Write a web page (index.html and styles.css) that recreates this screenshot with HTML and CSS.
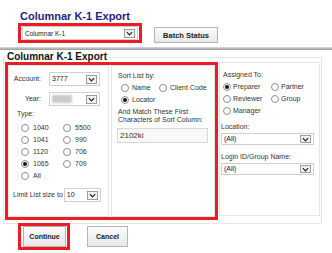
FILE: index.html
```html
<!DOCTYPE html>
<html>
<head>
	<title>Columnar K-1 Export</title>
	<link rel="stylesheet" href="styles.css">
</head>
<body>
	<h1 class="title">Columnar K-1 Export</h1>
	<div class="toolbar">
		<div class="mark mark-sel">
			<div class="select select-top">
				<span class="val">Columnar K-1</span>
				<span class="arrow"><svg viewBox="0 0 8 5"><polyline points="1,1 4,4 7,1"/></svg></span>
			</div>
		</div>
		<div class="button batch">Batch Status</div>
	</div>
	<div class="rule"></div>

	<fieldset class="panel">
		<legend>Columnar K-1 Export</legend>
		<div class="cols">
			<div class="mark mark-main">
				<div class="group left">
					<div class="field account">
						<label>Account:</label>
						<div class="select select-sm">
							<span class="val">3777</span>
							<span class="arrow"><svg viewBox="0 0 8 5"><polyline points="1,1 4,4 7,1"/></svg></span>
						</div>
					</div>
					<div class="field year">
						<label>Year:</label>
						<div class="select select-sm">
							<span class="val"><span class="blur"></span></span>
							<span class="arrow"><svg viewBox="0 0 8 5"><polyline points="1,1 4,4 7,1"/></svg></span>
						</div>
					</div>
					<div class="cap type">Type:</div>
					<div class="radios types">
						<label class="opt"><input type="radio" name="type">1040</label>
						<label class="opt"><input type="radio" name="type">5500</label>
						<label class="opt"><input type="radio" name="type">1041</label>
						<label class="opt"><input type="radio" name="type">990</label>
						<label class="opt"><input type="radio" name="type">1120</label>
						<label class="opt"><input type="radio" name="type">706</label>
						<label class="opt"><input type="radio" name="type" checked>1065</label>
						<label class="opt"><input type="radio" name="type">709</label>
						<label class="opt"><input type="radio" name="type">All</label>
					</div>
					<div class="field limit">
						<label>Limit List size to</label>
						<div class="select select-limit">
							<span class="val">10</span>
							<span class="arrow"><svg viewBox="0 0 8 5"><polyline points="1,1 4,4 7,1"/></svg></span>
						</div>
					</div>
				</div>
				<div class="group middle">
					<div class="cap">Sort List by:</div>
					<div class="radios sort">
						<label class="opt"><input type="radio" name="sort">Name</label>
						<label class="opt"><input type="radio" name="sort">Client Code</label>
						<label class="opt"><input type="radio" name="sort" checked>Locator</label>
					</div>
					<div class="cap match">And Match These First<br>Characters of Sort Column:</div>
					<input class="text" type="text" value="2102ki">
				</div>
			</div>
			<div class="group right">
				<div class="cap assigned">Assigned To:</div>
				<div class="radios assign">
					<label class="opt"><input type="radio" name="who" checked>Preparer</label>
					<label class="opt"><input type="radio" name="who">Partner</label>
					<label class="opt"><input type="radio" name="who">Reviewer</label>
					<label class="opt"><input type="radio" name="who">Group</label>
					<label class="opt"><input type="radio" name="who">Manager</label>
				</div>
				<div class="cap location">Location:</div>
				<div class="select select-wide">
					<span class="val">(All)</span>
					<span class="arrow"><svg viewBox="0 0 8 5"><polyline points="1,1 4,4 7,1"/></svg></span>
				</div>
				<div class="cap login">Login ID/Group Name:</div>
				<div class="select select-wide">
					<span class="val">(All)</span>
					<span class="arrow"><svg viewBox="0 0 8 5"><polyline points="1,1 4,4 7,1"/></svg></span>
				</div>
			</div>
		</div>
	</fieldset>

	<div class="actions">
		<div class="mark mark-btn">
			<div class="button continue">Continue</div>
		</div>
		<div class="button cancel">Cancel</div>
	</div>
</body>
</html>
```

FILE: styles.css
```css
html {
	background: #fff;
}

body {
	margin: 0;
	font-family: 'Liberation Sans', Arial, sans-serif;
	font-size: 7px;
	color: #333;
}

.title {
	margin: 0;
	padding: 9px 0 0 20px;
	font-size: 11px;
	line-height: 14px;
	font-weight: bold;
	color: #1f237f;
}

/* red annotation frames */
.mark {
	border: 3px solid #ec1c24;
}

.toolbar {
	display: flex;
	align-items: flex-end;
	margin-left: 18px;
}

.mark-sel {
	padding: 0 1px;
}

.select {
	display: flex;
	align-items: center;
	box-sizing: border-box;
	border: 1px solid #cfcfcf;
	background: #fff;
	padding-left: 2px;
	color: #222;
}
.select .val {
	flex: 1;
}
.select .arrow {
	display: flex;
	align-items: center;
	justify-content: center;
	box-sizing: border-box;
	width: 11px;
	height: 9px;
	margin-right: 2px;
	border: 1px solid #9c9c9c;
	background: #f1f1f1;
}
.select svg {
	width: 7px;
	height: 5px;
	fill: none;
	stroke: #222;
	stroke-width: 1.4;
}

.select-top {
	width: 116px;
	height: 14px;
	font-size: 6.5px;
}

.button {
	box-sizing: border-box;
	display: flex;
	align-items: center;
	justify-content: center;
	border: 1px solid #b4b4b4;
	background: linear-gradient(#fbfbfb, #e8e8e8);
	font-weight: bold;
	color: #222;
}

.batch {
	width: 64px;
	height: 16px;
	margin-left: 12px;
	font-size: 7.5px;
}

.rule {
	height: 3px;
	margin-top: 4px;
	background: linear-gradient(#dcdcdc, #959595);
}

.panel {
	margin: 1px 0 0 3px;
	padding: 0 0 3px 1px;
	width: 316px;
	border: 1px solid #e6e6e6;
}
.panel legend {
	padding: 0 2px;
	font-size: 10px;
	line-height: 12px;
	font-weight: bold;
	color: #111;
}

.cols {
	display: flex;
	align-items: flex-start;
	margin-top: -1px;
}

.mark-main {
	display: flex;
	gap: 2px;
	height: 152px;
}

.group {
	box-sizing: border-box;
	border: 1px solid #e6e6e6;
	line-height: 8px;
}

.left {
	width: 101px;
	height: 152px;
	padding: 6px 0 0 4px;
}
.middle {
	width: 104px;
	height: 152px;
	padding: 6px 0 0 6px;
}
.right {
	width: 101px;
	height: 154px;
	margin-left: 1px;
	padding: 8px 0 0 1px;
}

.field {
	display: flex;
	align-items: center;
}
.field label {
	width: 28px;
	margin-right: 8px;
	text-align: right;
}
.year {
	margin-top: 6px;
}
.select-sm {
	width: 51px;
	height: 14px;
}
.blur {
	display: block;
	width: 20px;
	height: 8px;
	background: #c9c9c9;
	filter: blur(1px);
}

.cap {
	line-height: 8px;
}
.type {
	margin: 4px 0 0 4px;
}

.radios {
	display: grid;
	grid-auto-rows: 12px;
	align-items: center;
}
.opt {
	display: flex;
	align-items: center;
	gap: 3px;
}
.opt input {
	appearance: none;
	-webkit-appearance: none;
	box-sizing: border-box;
	width: 8px;
	height: 8px;
	margin: 0;
	border: 1px solid #8d8d8d;
	border-radius: 50%;
	background: #fff;
	display: flex;
	align-items: center;
	justify-content: center;
}
.opt input:checked::after {
	content: '';
	width: 4px;
	height: 4px;
	border-radius: 50%;
	background: #111;
}

.types {
	grid-template-columns: 42px auto;
	margin: 4px 0 0 8px;
}
.types .opt {
	gap: 4px;
}

.limit {
	margin-top: 6px;
}
.limit label {
	width: auto;
	margin: 0 1px 0 0;
	text-align: left;
}
.select-limit {
	width: 37px;
	height: 14px;
}

.sort {
	grid-template-columns: 38px auto;
	margin: 2px 0 0 3px;
}
.match {
	margin-top: 2px;
}
.text {
	display: block;
	box-sizing: border-box;
	width: 91px;
	height: 15px;
	margin: 4px 0 0 -1px;
	padding: 0 2px;
	border: 1px solid #d8d8d8;
	background: #f8f8f6;
	font-family: 'Liberation Sans', Arial, sans-serif;
	font-size: 8px;
	color: #333;
	outline: none;
}

.assigned {
	margin-left: 2px;
}
.assign {
	grid-template-columns: 48px auto;
	margin: 2px 0 0 2px;
}
.assign .opt {
	gap: 2px;
}
.location {
	margin-top: 6px;
}
.select-wide {
	width: 93px;
	height: 12px;
	margin-top: 2px;
}
.select-wide .arrow {
	height: 8px;
}
.login {
	margin-top: 8px;
}

.actions {
	display: flex;
	align-items: center;
	margin: -1px 0 0 18px;
}
.mark-btn {
	padding: 0 1px 0 2px;
}
.continue {
	width: 43px;
	height: 21px;
}
.cancel {
	width: 41px;
	height: 21px;
	margin-left: 17px;
}
```
